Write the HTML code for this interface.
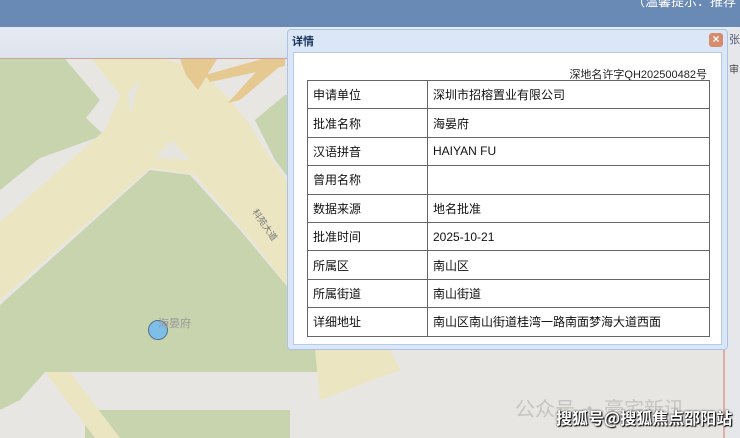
<!DOCTYPE html><html><head><meta charset="utf-8"><style>
body{margin:0;width:740px;height:438px;overflow:hidden;position:relative;font-family:"Liberation Sans","Noto Sans CJK SC",sans-serif;background:#e7e6e2}
.top{position:absolute;left:0;top:0;width:740px;height:27px;background:#6a8ab6}
.top span{position:absolute;right:4px;top:-9px;color:#fff;font-size:13px;white-space:nowrap}
.tb{position:absolute;left:0;top:27px;width:740px;height:31px;background:linear-gradient(#e6ebf3,#dde3ec);border-bottom:1px solid #c9a39c}
.dlg{position:absolute;left:287px;top:29px;width:439px;height:319px;background:#dbe7f7;border:1px solid #aac4e8;border-radius:4px}
.dlg .t{position:absolute;left:4px;top:3px;font-size:11px;font-weight:bold;color:#15305a}
.x{position:absolute;right:4px;top:3px;width:14px;height:14px;background:#d88c6e;border-radius:3px;color:#fff;font-size:12px;line-height:13px;text-align:center;font-weight:bold}
.in{position:absolute;left:5px;top:22px;width:427px;height:291px;background:#fff;border:1px solid #b4cbe9}
.no{position:absolute;right:14px;top:13px;font-size:11px;color:#222}
table{position:absolute;left:13px;top:27px;width:403px;border-collapse:collapse;font-size:12px;color:#111}
td{border:1px solid #666;height:27.4px;padding:0 0 0 5px}
td:first-child{width:114px}
.side{position:absolute;left:728px;top:29px;width:12px;height:409px;background:#e6e7ea}
</style></head><body>
<svg width="740" height="438" style="position:absolute;left:0;top:0">
<rect x="0" y="59" width="740" height="379" fill="#e7e6e2"/>
<polygon points="0,59 65,59 100,100 86,118 104,135 40,158 0,190" fill="#c8d4ae"/>
<polygon points="255,120 285,95 290,95 290,180 275,160" fill="#c8d4ae"/>
<polygon points="150,170 190,175 240,230 290,290 320,349 318,372 0,372 0,305" fill="#c8d4ae"/>
<polygon points="0,372 45,372 20,400 0,410" fill="#c8d4ae"/>
<polygon points="85,410 290,410 290,438 85,438" fill="#c8d4ae"/>
<polygon points="92,59 165,59 200,70 230,100 250,125 265,150 290,185 330,260 390,349 400,370 320,400 315,349 290,290 260,250 195,175 150,168 0,300 0,222 105,130 120,95" fill="#ebe5c2"/>
<polygon points="45,372 70,372 120,438 95,438" fill="#ebe5c2"/>
<polygon points="180,59 217,59 198,90 186,75" fill="#e6c990"/>
<polygon points="262,59 285,59 285,66 210,82 205,75" fill="#e6c990"/>
<polygon points="265,62 285,62 240,100 228,103" fill="#e6c990"/>
<polygon points="155,158 172,140 190,160" fill="#e6e4df"/>
<polygon points="128,92 140,80 130,115" fill="#e6e4df"/>
<circle cx="158" cy="330" r="9.5" fill="#7ebfea" stroke="#5a6f8a" stroke-width="1"/>
<text x="158" y="327" font-size="11" fill="#999" font-family="Noto Sans CJK SC">海晏府</text>
<text x="252" y="212" font-size="9" fill="#777" font-family="Noto Sans CJK SC" transform="rotate(55 252 212)">科苑大道</text>
<line x1="724" y1="349" x2="724" y2="438" stroke="#c77" stroke-width="1"/>
</svg>
<div class="top"><span>（温馨提示：推荐</span></div>
<div class="tb"></div>
<div class="side"><div style="font-size:11px;color:#557;padding:2px 1px">张</div><div style="font-size:10px;color:#444;padding:12px 1px">审</div></div>
<div style="position:absolute;left:515px;top:393px;font-size:20px;color:rgba(120,120,120,.3);font-family:'Noto Sans CJK SC';white-space:nowrap">公众号 · 豪宅新讯</div>
<div style="position:absolute;left:556px;top:405px;font-size:16px;font-weight:bold;color:#fff;white-space:nowrap;text-shadow:0 0 2px #000,1px 1px 1px #000;font-family:'Noto Sans CJK SC'">搜狐号@搜狐焦点邵阳站</div>
<div class="dlg"><div class="t">详情</div><div class="x">×</div>
<div class="in"><div class="no">深地名许字QH202500482号</div>
<table>
<tr><td>申请单位</td><td>深圳市招榕置业有限公司</td></tr>
<tr><td>批准名称</td><td>海晏府</td></tr>
<tr><td>汉语拼音</td><td>HAIYAN FU</td></tr>
<tr><td>曾用名称</td><td></td></tr>
<tr><td>数据来源</td><td>地名批准</td></tr>
<tr><td>批准时间</td><td>2025-10-21</td></tr>
<tr><td>所属区</td><td>南山区</td></tr>
<tr><td>所属街道</td><td>南山街道</td></tr>
<tr><td>详细地址</td><td>南山区南山街道桂湾一路南面梦海大道西面</td></tr>
</table></div></div>
</body></html>
